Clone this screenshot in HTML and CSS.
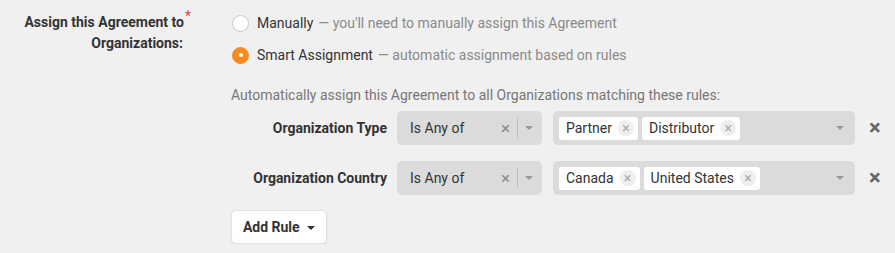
FILE: index.html
```html
<!DOCTYPE html>
<html lang="en">
<head>
    <meta charset="UTF-8">
    <meta name="viewport" content="width=device-width, initial-scale=1.0">
    <title>Agreement Assignment</title>
    <link rel="stylesheet" href="styles.css">
</head>
<body>
    <div class="form-row">
        <!-- Field label -->
        <div class="form-label">
            Assign this Agreement to<span class="required">*</span><br>Organizations:
        </div>

        <div class="form-field">
            <!-- Assignment mode -->
            <label class="radio-option">
                <span class="radio"></span>
                <span class="radio-text">Manually</span>
                <span class="radio-hint">&mdash; you'll need to manually assign this Agreement</span>
            </label>
            <label class="radio-option">
                <span class="radio checked"></span>
                <span class="radio-text">Smart Assignment</span>
                <span class="radio-hint">&mdash; automatic assignment based on rules</span>
            </label>

            <!-- Rules -->
            <div class="rules">
                <div class="rules-intro">Automatically assign this Agreement to all Organizations matching these rules:</div>

                <div class="rule">
                    <div class="rule-label">Organization Type</div>
                    <div class="select operator">
                        <span class="select-value">Is Any of</span>
                        <span class="select-clear">&times;</span>
                        <span class="select-sep"></span>
                        <span class="caret"></span>
                    </div>
                    <div class="select values">
                        <span class="tag">Partner <span class="tag-remove">&times;</span></span>
                        <span class="tag">Distributor <span class="tag-remove">&times;</span></span>
                        <span class="caret"></span>
                    </div>
                    <span class="rule-remove">&times;</span>
                </div>

                <div class="rule">
                    <div class="rule-label">Organization Country</div>
                    <div class="select operator">
                        <span class="select-value">Is Any of</span>
                        <span class="select-clear">&times;</span>
                        <span class="select-sep"></span>
                        <span class="caret"></span>
                    </div>
                    <div class="select values">
                        <span class="tag">Canada <span class="tag-remove">&times;</span></span>
                        <span class="tag">United States <span class="tag-remove">&times;</span></span>
                        <span class="caret"></span>
                    </div>
                    <span class="rule-remove">&times;</span>
                </div>

                <button class="add-rule">Add Rule <span class="caret dark"></span></button>
            </div>
        </div>
    </div>
</body>
</html>
```

FILE: styles.css
```css
/* Basic page styling */
body {
    margin: 0;
    background: #f0f0f0;
    font-family: Roboto, "Liberation Sans", sans-serif;
    font-size: 14px;
    color: #333;
}

.form-row {
    display: flex;
    padding-top: 12px;
}

/* Left label column */
.form-label {
    width: 183px;
    flex-shrink: 0;
    text-align: right;
    font-weight: bold;
    line-height: 21px;
    color: #333;
}

.required {
    position: relative;
    top: -6px;
    margin-right: -8px;
    padding-left: 1px;
    color: #e8473b;
    font-weight: normal;
}

.form-field {
    margin-left: 49px;
    margin-top: -5px;
    flex: 1;
}

/* Radio options */
.radio-option {
    display: flex;
    align-items: center;
    height: 32px;
    cursor: pointer;
}

.radio {
    width: 15px;
    height: 15px;
    border: 1px solid #c8c8c8;
    border-radius: 50%;
    background: white;
    margin-right: 8px;
    box-sizing: content-box;
    position: relative;
}

.radio.checked {
    background: #f68b1f;
    border-color: #f68b1f;
}

.radio.checked::after {
    content: "";
    position: absolute;
    left: 5.5px;
    top: 5.5px;
    width: 4px;
    height: 4px;
    border-radius: 50%;
    background: white;
}

.radio-text {
    color: #333;
}

.radio-hint {
    color: #8a8a8a;
    margin-left: 5px;
}

/* Rules */
.rules {
    margin-top: 14px;
}

.rules-intro {
    color: #777;
    line-height: 20px;
    margin-left: -1px;
}

.rule {
    display: flex;
    align-items: center;
    margin-top: 6px;
    margin-bottom: 16px;
}

.rule-label {
    width: 155px;
    text-align: right;
    font-weight: bold;
    margin-right: 10px;
}

.select {
    display: flex;
    align-items: center;
    height: 34px;
    background: #dbdbdb;
    border-radius: 5px;
    box-sizing: border-box;
}

.operator {
    width: 145px;
    padding: 0 9px 0 13px;
    margin-right: 11px;
}

.select-value {
    flex: 1;
}

.select-clear {
    color: #888;
    font-size: 17px;
    margin-right: 7px;
}

.select-sep {
    width: 1px;
    height: 20px;
    background: #bdbdbd;
    margin-right: 7px;
}

.caret {
    width: 0;
    height: 0;
    border-left: 4px solid transparent;
    border-right: 4px solid transparent;
    border-top: 4px solid #999;
}

.caret.dark {
    border-top-color: #333;
    display: inline-block;
    vertical-align: middle;
    margin-left: 4px;
}

.values {
    width: 302px;
    padding: 0 11px 0 6px;
    gap: 4px;
}

.values .caret {
    margin-left: auto;
}

.tag {
    display: flex;
    align-items: center;
    height: 23px;
    background: white;
    border-radius: 3px;
    padding: 0 4px 0 7px;
}

.tag-remove {
    display: inline-flex;
    align-items: center;
    justify-content: center;
    width: 16px;
    height: 16px;
    border-radius: 50%;
    background: #efefef;
    color: #aaa;
    font-size: 14px;
    margin-left: 6px;
}

.rule-remove {
    margin-left: 14px;
    color: #666;
    font-size: 22px;
    font-weight: bold;
    line-height: 1;
}

/* Add rule button */
.add-rule {
    margin: -1px 0 0 -1px;
    width: 96px;
    height: 34px;
    background: white;
    border: 1px solid #e2e2e2;
    border-radius: 5px;
    box-shadow: 0 1px 2px rgba(0,0,0,0.08);
    font-family: Roboto, "Liberation Sans", sans-serif;
    font-size: 14px;
    font-weight: bold;
    color: #333;
    cursor: pointer;
}
```
